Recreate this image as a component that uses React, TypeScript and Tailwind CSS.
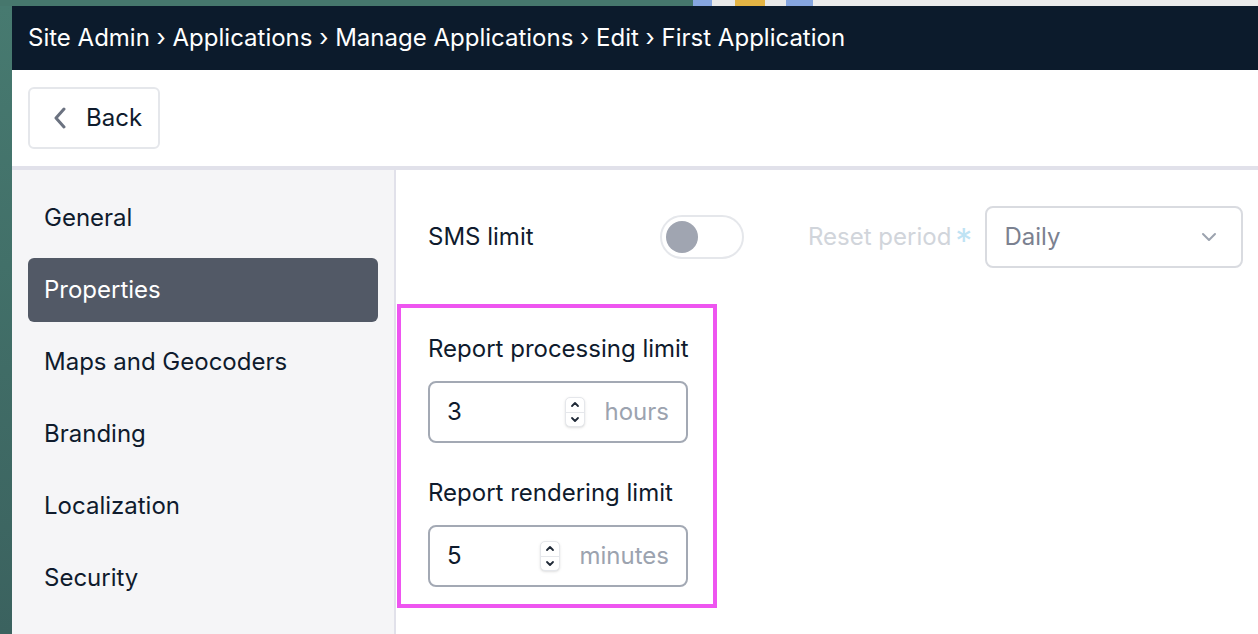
import { useState } from "react";

const font = { fontFamily: "Inter, 'Noto Sans', sans-serif" };

const navItems = ["General", "Properties", "Maps and Geocoders", "Branding", "Localization", "Security"];

function Spinner() {
  return (
    <div className="flex h-[30px] w-[20px] flex-col items-center justify-between rounded-[5px] border border-[#e5e7eb] bg-white py-[2px] shadow-sm">
      <svg width="10" height="8" viewBox="0 0 10 8" fill="none">
        <path d="M2 6 L5 3 L8 6" stroke="#1f2937" strokeWidth="1.8" strokeLinecap="round" strokeLinejoin="round" />
      </svg>
      <div className="h-px w-full bg-[#e5e7eb]" />
      <svg width="10" height="8" viewBox="0 0 10 8" fill="none">
        <path d="M2 2 L5 5 L8 2" stroke="#1f2937" strokeWidth="1.8" strokeLinecap="round" strokeLinejoin="round" />
      </svg>
    </div>
  );
}

function LimitField({ label, value, unit }: { label: string; value: string; unit: string }) {
  return (
    <div className="flex flex-col gap-4">
      <div className="text-[24px] leading-8 text-[#0f1b2d]">{label}</div>
      <div className="flex h-[62px] w-[260px] items-center rounded-lg border-2 border-[#a3a9b4] pl-[17px] pr-[17px]">
        <span className="flex-1 text-[24px] text-[#0f1b2d]">{value}</span>
        <Spinner />
        <span className="ml-5 text-[24px] text-[#9ca3af]">{unit}</span>
      </div>
    </div>
  );
}

export default function App() {
  const [active] = useState("Properties");

  return (
    <div className="flex h-[634px] w-[1258px] flex-col overflow-hidden bg-[#ebebeb]" style={font}>
      {/* desktop strip behind the window */}
      <div className="flex h-[6px] shrink-0">
        <div className="w-[693px] bg-[#46776d]" />
        <div className="w-[19px] bg-[#86a6e0]" />
        <div className="w-[23px] bg-[#e9e9e9]" />
        <div className="w-[30px] bg-[#e5b545]" />
        <div className="w-[21px] bg-[#e9e9e9]" />
        <div className="w-[27px] bg-[#86a6e0]" />
        <div className="flex-1 bg-[#ebebeb]" />
      </div>
      <div className="flex flex-1">
        <div className="w-[12px] shrink-0 bg-gradient-to-b from-[#477a70] to-[#3b625f]" />
        <div className="flex flex-1 flex-col bg-white">
          <header className="flex h-[64px] shrink-0 items-center bg-[#0c1b2c] px-4 text-[24px] text-white">
            Site Admin › Applications › Manage Applications › Edit › First Application
          </header>
          <div className="h-[96px] shrink-0 px-4 pt-[17px]">
            <button className="flex h-[62px] w-[132px] items-center gap-[18px] rounded-md border-2 border-[#e5e7eb] bg-white pl-[22px] text-[24px] text-[#0f1b2d]">
              <svg width="16" height="22" viewBox="0 0 16 22" fill="none">
                <path d="M12 2 L4 11 L12 20" stroke="#6b7280" strokeWidth="3" strokeLinecap="round" strokeLinejoin="round" />
              </svg>
              Back
            </button>
          </div>
          <div className="h-[4px] shrink-0 bg-[#e1e1ea]" />
          <div className="flex flex-1">
            <nav className="flex w-[384px] shrink-0 flex-col gap-2 border-r-2 border-[#e1e1ea] bg-[#f5f5f7] px-4 pt-4">
              {navItems.map((item) => (
                <div
                  key={item}
                  className={
                    item === active
                      ? "flex h-16 items-center rounded-md bg-[#525966] px-4 text-[24px] text-white"
                      : "flex h-16 items-center px-4 text-[24px] text-[#0f1b2d]"
                  }
                >
                  {item}
                </div>
              ))}
            </nav>
            <main className="flex-1 pt-[36px]">
              <div className="flex items-center pl-8">
                <span className="w-[232px] text-[24px] text-[#0f1b2d]">SMS limit</span>
                <div className="flex h-[44px] w-[84px] items-center rounded-full border-2 border-[#e5e7eb] px-1">
                  <div className="h-8 w-8 rounded-full bg-[#a0a5b1]" />
                </div>
                <span className="ml-16 text-[24px] text-[#d1d5db]">Reset period</span>
                <span className="relative top-[4px] ml-1 text-[34px] leading-none text-[#bfe3f4]">*</span>
                <div className="ml-[13px] flex h-[62px] w-[258px] items-center justify-between rounded-lg border-2 border-[#d9dbe0] pl-[17px] pr-6">
                  <span className="text-[24px] text-[#7b8190]">Daily</span>
                  <svg width="16" height="10" viewBox="0 0 16 10" fill="none">
                    <path d="M2 2 L8 8 L14 2" stroke="#9ca3af" strokeWidth="2" strokeLinecap="round" strokeLinejoin="round" />
                  </svg>
                </div>
              </div>
              <div className="mt-9 ml-px flex w-[320px] flex-col gap-[34px] border-4 border-[#ee55f0] pb-[17px] pl-[27px] pt-[25px]">
                <LimitField label="Report processing limit" value="3" unit="hours" />
                <LimitField label="Report rendering limit" value="5" unit="minutes" />
              </div>
            </main>
          </div>
        </div>
      </div>
    </div>
  );
}
